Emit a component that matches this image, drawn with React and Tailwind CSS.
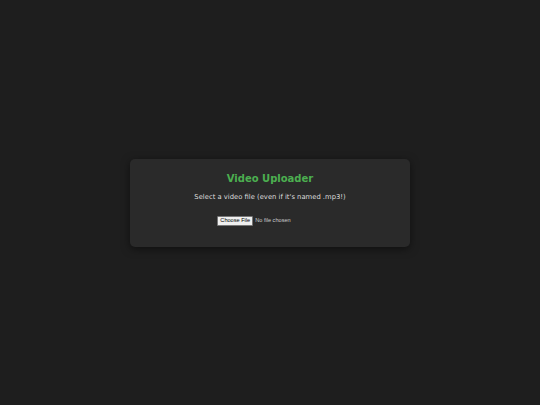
import React from 'react';

const App = () => {
  return (
    <div
      className="w-[540px] h-[405px] bg-[#1e1e1e] flex items-center justify-center"
      style={{ fontFamily: '"DejaVu Sans", Verdana, sans-serif' }}
    >
      <div className="w-[280px] h-[88px] bg-[#2a2a2a] rounded-[5px] shadow-[0_2px_8px_rgba(0,0,0,0.5)] flex flex-col items-center pt-[13px]">
        <h1 className="text-[10px] leading-[13px] font-bold text-[#4caf50]">Video Uploader</h1>
        <p className="mt-[8px] text-[6.8px] leading-[9px] text-[#dddddd]">
          Select a video file (even if it's named .mp3!)
        </p>
        <div className="mt-[14px] flex items-center gap-[2px] -ml-[32px]">
          <span
            className="bg-[#efefef] text-black text-[5.6px] leading-[7px] px-[2px] py-[0.5px] border border-[#767676] rounded-[1px]"
            style={{ fontFamily: '"Liberation Sans", Arial, sans-serif' }}
          >
            Choose File
          </span>
          <span
            className="text-[5.6px] text-[#cccccc]"
            style={{ fontFamily: '"Liberation Sans", Arial, sans-serif' }}
          >
            No file chosen
          </span>
        </div>
      </div>
    </div>
  );
};

export default App;
